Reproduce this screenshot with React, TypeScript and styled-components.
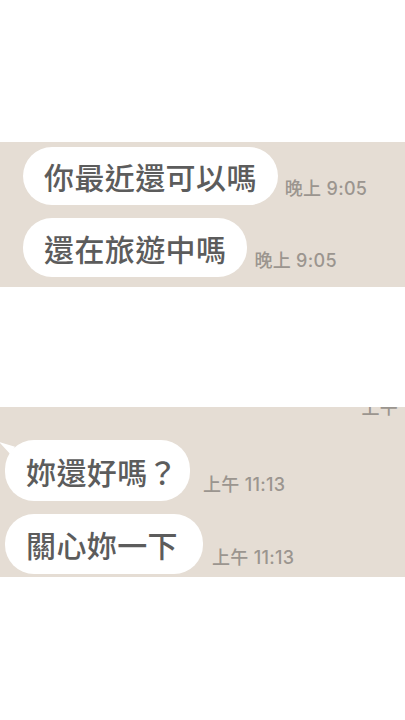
import React from 'react';
import styled, { createGlobalStyle } from 'styled-components';

const GlobalStyle = createGlobalStyle`
  body {
    margin: 0;
    background: #fff;
    font-family: 'Noto Sans CJK TC', 'Noto Sans', sans-serif;
  }
`;

const Page = styled.div`
  width: 405px;
  height: 720px;
  padding-top: 142px;
  box-sizing: border-box;
  display: flex;
  flex-direction: column;
  gap: 120px;
`;

const Panel = styled.div<{ h: number; top: number; left: number }>`
  position: relative;
  height: ${(p) => p.h}px;
  background: #e5ddd4;
  overflow: hidden;
  box-sizing: border-box;
  padding: ${(p) => p.top}px 0 0 ${(p) => p.left}px;
  display: flex;
  flex-direction: column;
  gap: 13px;
`;

const Row = styled.div<{ gap: number }>`
  display: flex;
  align-items: flex-end;
  gap: ${(p) => p.gap}px;
`;

const Bubble = styled.div<{ h: number; pr?: number; tail?: boolean }>`
  position: relative;
  height: ${(p) => p.h}px;
  background: #fff;
  border-radius: 29px;
  padding: 0 ${(p) => p.pr ?? 21}px 0 21px;
  display: flex;
  align-items: center;
  font-size: 30px;
  font-weight: 500;
  color: #5c5c5c;
  letter-spacing: 0.4px;
  white-space: nowrap;
  ${(p) =>
    p.tail &&
    `
    &::before {
      content: '';
      position: absolute;
      left: -6px;
      top: 2px;
      width: 16px;
      height: 12px;
      background: #fff;
      clip-path: polygon(0 0, 100% 40%, 70% 100%);
    }
  `}
`;

const Time = styled.span`
  font-family: Inter, 'Noto Sans CJK TC', sans-serif;
  font-size: 18px;
  font-weight: 500;
  letter-spacing: 0.3px;
  color: #9b958f;
  line-height: 20px;
  padding-bottom: 6px;
  white-space: nowrap;
`;

const CutTime = styled(Time)`
  position: absolute;
  right: 7px;
  top: -9px;
  padding: 0;
`;

export default function App() {
  return (
    <>
      <GlobalStyle />
      <Page>
        <Panel h={145} top={5} left={23}>
          <Row gap={7}>
            <Bubble h={58}>你最近還可以嗎</Bubble>
            <Time>晚上 9:05</Time>
          </Row>
          <Row gap={7}>
            <Bubble h={59}>還在旅遊中嗎</Bubble>
            <Time>晚上 9:05</Time>
          </Row>
        </Panel>
        <Panel h={170} top={33} left={5}>
          <CutTime>上午</CutTime>
          <Row gap={13}>
            <Bubble h={61} pr={12} tail>
              妳還好嗎？
            </Bubble>
            <Time>上午 11:13</Time>
          </Row>
          <Row gap={9}>
            <Bubble h={60} pr={25}>
              關心妳一下
            </Bubble>
            <Time>上午 11:13</Time>
          </Row>
        </Panel>
      </Page>
    </>
  );
}
